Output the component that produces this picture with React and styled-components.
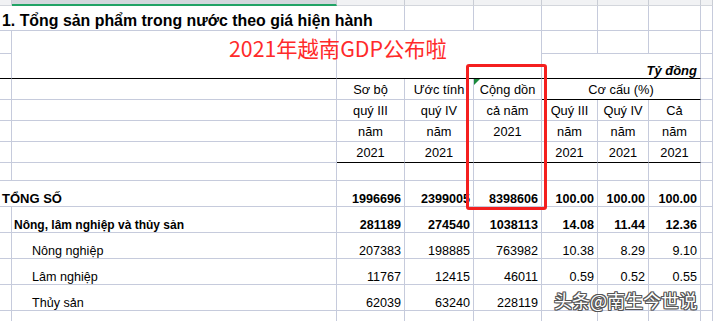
import React from "react";
import styled, { createGlobalStyle } from "styled-components";

const Global = createGlobalStyle`
  html, body { margin: 0; padding: 0; background: #fff; overflow: hidden; }
  body { font-family: "Liberation Sans", Arial, sans-serif; }
`;

const GRID = "#c6cbdc";

const Page = styled.div`
  position: relative;
  width: 713px;
  height: 321px;
  overflow: hidden;
  background: #fff;
`;

const Sheet = styled.div`
  display: grid;
  grid-template-columns: 12px 325px 68px 69px 68px 56px 51px 52px 12px;
  grid-template-rows: 6px 25px 23px 25px 21px 21px 21px 21px 18px 26px 26px 26px 26px 26px 11px;
`;

const HeadBar = styled.div`
  grid-column: ${(p) => p.$col};
  grid-row: 1;
  box-sizing: border-box;
  background: ${(p) => (p.$active ? "#d3d7dd" : "#f1f2f4")};
  border-right: 1px solid #c9cdd5;
  border-bottom: ${(p) => (p.$active ? "2px solid #21a366" : "1px solid #d3d6dc")};
`;

const Cell = styled.div`
  grid-column: ${(p) => p.$col} / span ${(p) => p.$span || 1};
  grid-row: ${(p) => p.$row} / span ${(p) => p.$rspan || 1};
  box-sizing: border-box;
  border-right: 1px solid ${GRID};
  border-bottom: 1px solid ${(p) => p.$bb || GRID};
  display: flex;
  align-items: ${(p) => (p.$mid ? "center" : "flex-end")};
  justify-content: ${(p) =>
    p.$align === "right" ? "flex-end" : p.$align === "center" ? "center" : "flex-start"};
  padding: 0 ${(p) => (p.$align === "right" ? "3px" : "0")} 0 ${(p) => p.$indent || 0}px;
  font-size: ${(p) => p.$size || 12.6}px;
  font-weight: ${(p) => (p.$bold ? 700 : 400)};
  font-style: ${(p) => (p.$italic ? "italic" : "normal")};
  color: #000;
  white-space: nowrap;
  overflow: ${(p) => (p.$overflow ? "visible" : "hidden")};
  position: relative;
  z-index: ${(p) => (p.$overflow ? 2 : 1)};
`;

const Corner = styled.span`
  position: absolute;
  left: 0;
  top: 0;
  width: 0;
  height: 0;
  border-top: 6px solid #1b8a3c;
  border-right: 6px solid transparent;
`;

const Overlay = styled.div`
  position: absolute;
  left: 229px;
  top: 33px;
  font-family: "Noto Sans CJK SC", sans-serif;
  font-size: 21.3px;
  line-height: 30px;
  color: #ff2a2a;
  white-space: nowrap;
  z-index: 5;
`;

const RedBox = styled.div`
  position: absolute;
  left: 466px;
  top: 64px;
  width: 81px;
  height: 146px;
  box-sizing: border-box;
  border: 3px solid #f41f1f;
  border-radius: 3px;
  z-index: 6;
`;

const Watermark = styled.div`
  position: absolute;
  left: 554px;
  top: 288px;
  font-family: "Noto Sans CJK SC", sans-serif;
  font-size: 18px;
  line-height: 24px;
  color: #fff;
  white-space: nowrap;
  z-index: 7;
  text-shadow: 1px 0 0 #555, -1px 0 0 #555, 0 1px 0 #555, 0 -1px 0 #555,
    1px 1px 0 #555, -1px -1px 0 #555, 1px -1px 0 #555, -1px 1px 0 #555;
`;

const cols = ["C", "D", "E", "F", "G", "H"];
const colIndex = { A: 1, B: 2, C: 3, D: 4, E: 5, F: 6, G: 7, H: 8, I: 9 };

const rows = [
  { label: "TỔNG SỐ", bold: true, size: 13, indent: 2, labelCol: "A", span: 2,
    vals: ["1996696", "2399005", "8398606", "100.00", "100.00", "100.00"] },
  { label: "Nông, lâm nghiệp và thủy sản", bold: true, size: 12, indent: 2, labelCol: "B",
    vals: ["281189", "274540", "1038113", "14.08", "11.44", "12.36"] },
  { label: "Nông nghiệp", indent: 20, labelCol: "B",
    vals: ["207383", "198885", "763982", "10.38", "8.29", "9.10"] },
  { label: "Lâm nghiệp", indent: 20, labelCol: "B",
    vals: ["11767", "12415", "46011", "0.59", "0.52", "0.55"] },
  { label: "Thủy sản", indent: 20, labelCol: "B",
    vals: ["62039", "63240", "228119", "", "", ""] },
];

const headRows = [
  ["Sơ bộ", "Ước tính", "Cộng dồn", null, null, null],
  ["quý III", "quý IV", "cả năm", "Quý III", "Quý IV", "Cả"],
  ["năm", "năm", "2021", "năm", "năm", "năm"],
  ["2021", "2021", "", "2021", "2021", "2021"],
];

export default function App() {
  const cells = [];
  for (let c = 1; c <= 9; c++) {
    cells.push(<HeadBar key={"hb" + c} $col={c} $active={c === 2} />);
  }
  cells.push(
    <Cell key="title" $col={1} $span={3} $row={2} $size={15.9} $bold $indent={2} $overflow>
      1. Tổng sản phẩm trong nước theo giá hiện hành
    </Cell>
  );
  for (let c = 4; c <= 9; c++) cells.push(<Cell key={"r2" + c} $col={c} $row={2} />);
  cells.push(<Cell key="r3a" $col={1} $row={3} />);
  cells.push(<Cell key="r4a" $col={1} $row={4} $bb="#000" />);
  cells.push(<Cell key="r3b" $col={2} $row={3} $rspan={2} $bb="#000" />);
  cells.push(<Cell key="r3c" $col={3} $span={3} $row={3} $rspan={2} $bb="#000" />);
  for (let c = 6; c <= 9; c++) cells.push(<Cell key={"r3" + c} $col={c} $row={3} />);
  cells.push(
    <Cell key="unit" $col={6} $span={3} $row={4} $align="right" $bold $italic $size={13} $bb="#000">
      Tỷ đồng
    </Cell>
  );
  cells.push(<Cell key="r4i" $col={9} $row={4} />);
  headRows.forEach((hr, i) => {
    const r = 5 + i;
    cells.push(<Cell key={"h" + r + "a"} $col={1} $row={r} />);
    cells.push(<Cell key={"h" + r + "b"} $col={2} $row={r} />);
    hr.forEach((t, j) => {
      if (t === null) return;
      cells.push(
        <Cell
          key={"h" + r + j}
          $col={3 + j}
          $row={r}
          $align="center"
          $mid
          $size={12.8}
          $bb={r === 8 ? "#000" : undefined}
        >
          {r === 5 && j === 2 && <Corner />}
          {t}
        </Cell>
      );
    });
    if (r === 5) {
      cells.push(
        <Cell key="cocau" $col={6} $span={3} $row={5} $align="center" $mid $size={12.8} $bb="#000">
          Cơ cấu (%)
        </Cell>
      );
    }
    cells.push(<Cell key={"h" + r + "i"} $col={9} $row={r} />);
  });
  for (let c = 1; c <= 9; c++) cells.push(<Cell key={"sp" + c} $col={c} $row={9} />);
  rows.forEach((d, i) => {
    const r = 10 + i;
    if (d.labelCol === "B") cells.push(<Cell key={"d" + r + "a"} $col={1} $row={r} />);
    cells.push(
      <Cell
        key={"d" + r + "l"}
        $col={colIndex[d.labelCol]}
        $span={d.span || 1}
        $row={r}
        $bold={d.bold}
        $size={d.size || 12.6}
        $indent={d.indent}
      >
        {d.label}
      </Cell>
    );
    d.vals.forEach((v, j) => {
      cells.push(
        <Cell key={"d" + r + cols[j]} $col={3 + j} $row={r} $align="right" $bold={d.bold} $size={12.6}>
          {v}
        </Cell>
      );
    });
    cells.push(<Cell key={"d" + r + "i"} $col={9} $row={r} />);
  });
  for (let c = 1; c <= 9; c++) cells.push(<Cell key={"end" + c} $col={c} $row={15} />);

  return (
    <Page>
      <Global />
      <Sheet>{cells}</Sheet>
      <Overlay>2021年越南GDP公布啦</Overlay>
      <RedBox />
      <Watermark>头条@南生今世说</Watermark>
    </Page>
  );
}
